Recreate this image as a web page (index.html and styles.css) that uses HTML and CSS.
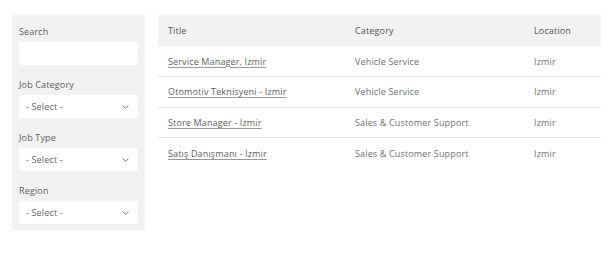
FILE: index.html
```html
<!DOCTYPE html>
<html>
<head>
<meta charset="utf-8">
<link rel="stylesheet" href="styles.css">
</head>
<body>
<div class="page">
  <aside class="filters">
    <div class="field">
      <label class="label">Search</label>
      <div class="input"></div>
    </div>
    <div class="field">
      <label class="label">Job Category</label>
      <div class="input select"><span>- Select -</span><svg class="chev" width="7" height="4" viewBox="0 0 7 4"><path d="M0.5 0.5 L3.5 3.3 L6.5 0.5" fill="none" stroke="#777" stroke-width="1"/></svg></div>
    </div>
    <div class="field">
      <label class="label">Job Type</label>
      <div class="input select"><span>- Select -</span><svg class="chev" width="7" height="4" viewBox="0 0 7 4"><path d="M0.5 0.5 L3.5 3.3 L6.5 0.5" fill="none" stroke="#777" stroke-width="1"/></svg></div>
    </div>
    <div class="field">
      <label class="label">Region</label>
      <div class="input select"><span>- Select -</span><svg class="chev" width="7" height="4" viewBox="0 0 7 4"><path d="M0.5 0.5 L3.5 3.3 L6.5 0.5" fill="none" stroke="#777" stroke-width="1"/></svg></div>
    </div>
  </aside>
  <table class="jobs">
    <thead>
      <tr><th class="c-title">Title</th><th class="c-cat">Category</th><th class="c-loc">Location</th></tr>
    </thead>
    <tbody>
      <tr><td><a href="#">Service Manager, Izmir</a></td><td>Vehicle Service</td><td>Izmir</td></tr>
      <tr><td><a href="#">Otomotiv Teknisyeni - Izmir</a></td><td>Vehicle Service</td><td>Izmir</td></tr>
      <tr><td><a href="#">Store Manager - Izmir</a></td><td>Sales &amp; Customer Support</td><td>Izmir</td></tr>
      <tr><td><a href="#">Satış Danışmanı - İzmir</a></td><td>Sales &amp; Customer Support</td><td>Izmir</td></tr>
    </tbody>
  </table>
</div>
</body>
</html>
```
FILE: styles.css
```css
* { box-sizing: border-box; }
body {
  margin: 0;
  background: #fff;
  font-family: "Open Sans", "Liberation Sans", sans-serif;
  font-size: 9px;
  color: #666;
}
.page {
  display: flex;
  align-items: flex-start;
  gap: 13px;
  padding: 15px 13px 0 12px;
}
.filters {
  width: 133px;
  flex: none;
  background: #f2f2f2;
  padding: 10px 7px 6px;
  display: flex;
  flex-direction: column;
  gap: 13px;
}
.field { display: flex; flex-direction: column; }
.label {
  display: block;
  line-height: 13px;
  margin-bottom: 4px;
  color: #606060;
  font-weight: 400;
  letter-spacing: 0.15px;
}
.input {
  height: 23px;
  background: #fff;
  border-radius: 2px;
}
.select {
  display: flex;
  align-items: center;
  justify-content: space-between;
  padding: 0 9px 0 7px;
  color: #666;
  letter-spacing: 0.15px;
}
.chev { display: block; }
.jobs {
  flex: 1;
  border-collapse: collapse;
}
.jobs th {
  background: #f2f2f2;
  height: 31px;
  text-align: left;
  font-weight: 400;
  color: #555;
  padding: 0 10px;
  letter-spacing: 0.15px;
}
.jobs td {
  height: 30.6px;
  padding: 0 10px;
  border-bottom: 1px solid #e6e6e6;
  color: #707070;
  letter-spacing: 0.15px;
}
.jobs tbody tr:last-child td { border-bottom: none; }
.jobs .c-title { width: 187px; }
.jobs .c-cat { width: 179px; }
.jobs a {
  color: #606060;
  text-decoration: underline;
  text-decoration-color: #999;
  text-underline-offset: 2px;
}
```
